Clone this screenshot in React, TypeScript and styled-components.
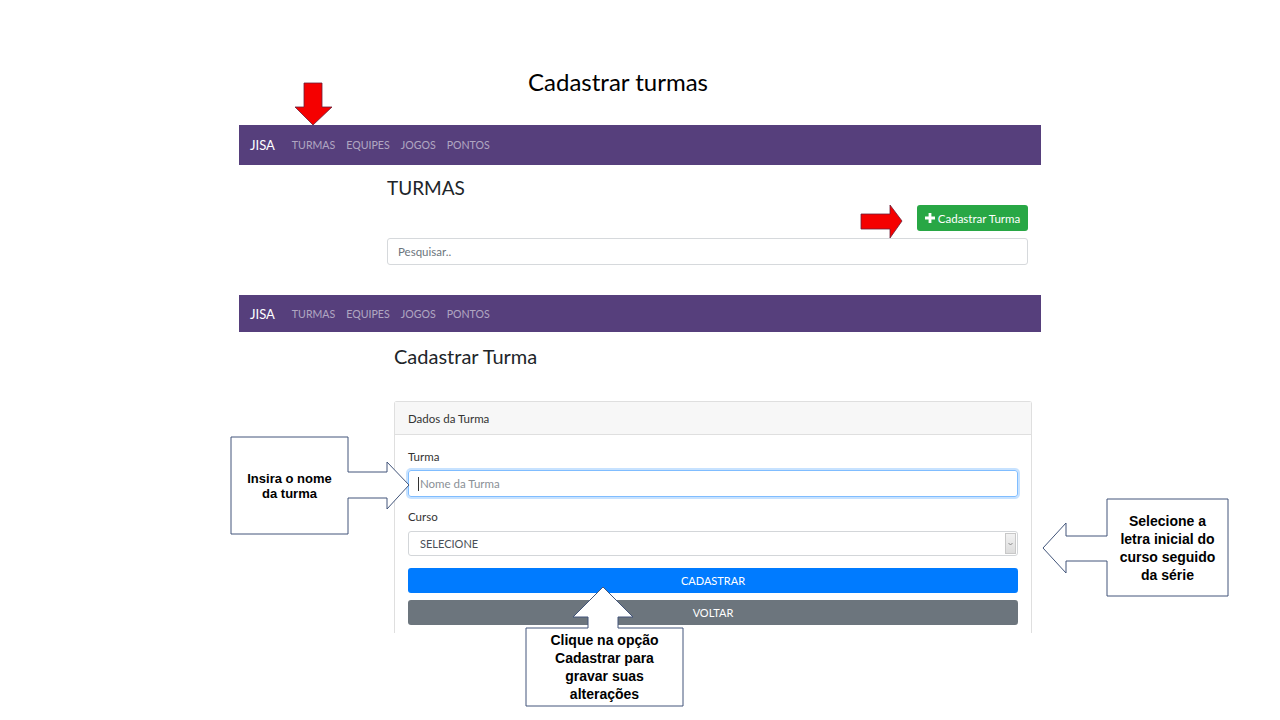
import React from 'react';
import styled, { createGlobalStyle } from 'styled-components';

const GlobalStyle = createGlobalStyle`
  html, body {
    margin: 0;
    padding: 0;
    background: #ffffff;
  }
  body {
    font-family: Lato, "Open Sans", sans-serif;
    color: #212529;
  }
`;

const Slide = styled.div`
  position: relative;
  width: 1280px;
  height: 720px;
  overflow: hidden;
  background: #ffffff;
  display: flex;
  flex-direction: column;
`;

const SlideTitle = styled.h1`
  margin: 64px 0 0 0;
  padding-right: 44px;
  height: 36px;
  line-height: 36px;
  text-align: center;
  font-family: Lato, "Open Sans", sans-serif;
  font-size: 24px;
  font-weight: 400;
  color: #000;
`;

const Shot = styled.section<{ $top: number }>`
  margin: ${({ $top }) => $top}px 0 0 239px;
  width: 802px;
  display: flex;
  flex-direction: column;
`;

const Navbar = styled.nav<{ $h: number }>`
  height: ${({ $h }) => $h}px;
  background: #563f7c;
  display: flex;
  align-items: center;
  padding: 0 11px;
`;

const Brand = styled.span`
  color: #ffffff;
  font-size: 13px;
  margin-right: 17px;
`;

const NavLink = styled.span`
  color: rgba(255, 255, 255, 0.55);
  font-size: 10.6px;
  margin-right: 11px;
`;

const ListBody = styled.div`
  padding: 0 13px 0 148px;
  display: flex;
  flex-direction: column;
`;

const PageHeading = styled.h2<{ $top: number; $size: number }>`
  margin: ${({ $top }) => $top}px 0 0 0;
  font-size: ${({ $size }) => $size}px;
  font-weight: 400;
  line-height: 26px;
  color: #212529;
`;

const ActionRow = styled.div`
  display: flex;
  justify-content: flex-end;
  margin-top: 4px;
`;

const GreenButton = styled.button`
  height: 26px;
  width: 111px;
  border: none;
  border-radius: 3px;
  background: #28a745;
  color: #ffffff;
  font-family: inherit;
  font-size: 11.5px;
  display: flex;
  align-items: center;
  justify-content: center;
  gap: 3px;
  padding: 0;
`;

const SearchBox = styled.div`
  margin-top: 7px;
  height: 27px;
  box-sizing: border-box;
  border: 1px solid #d6d9dc;
  border-radius: 3px;
  display: flex;
  align-items: center;
  padding-left: 10px;
  font-size: 11.5px;
  color: #6c757d;
`;

const FormBody = styled.div`
  padding: 0 9px 0 155px;
  display: flex;
  flex-direction: column;
`;

const Card = styled.div`
  margin-top: 32px;
  border: 1px solid #dfdfdf;
  border-bottom: none;
  border-radius: 3px 3px 0 0;
  display: flex;
  flex-direction: column;
`;

const CardHeader = styled.div`
  height: 33px;
  box-sizing: border-box;
  background: #f7f7f7;
  border-bottom: 1px solid #dfdfdf;
  display: flex;
  align-items: center;
  padding-left: 13px;
  font-size: 11.5px;
  color: #333;
`;

const CardBody = styled.div`
  padding: 15px 13px 8px 13px;
  display: flex;
  flex-direction: column;
`;

const FieldLabel = styled.label<{ $top?: number }>`
  margin-top: ${({ $top }) => $top ?? 0}px;
  font-size: 11.5px;
  line-height: 14px;
  color: #333;
`;

const TextInput = styled.div`
  margin-top: 6px;
  height: 27px;
  box-sizing: border-box;
  border: 1px solid #80bdff;
  border-radius: 3px;
  box-shadow: 0 0 0 2px rgba(0, 123, 255, 0.22);
  display: flex;
  align-items: center;
  padding-left: 9px;
  font-size: 11.5px;
  color: #8a9096;
`;

const Caret = styled.span`
  width: 1px;
  height: 14px;
  background: #333;
  margin-right: 1px;
`;

const SelectBox = styled.div`
  margin-top: 7px;
  height: 25px;
  box-sizing: border-box;
  border: 1px solid #d3d6d9;
  border-radius: 3px;
  display: flex;
  align-items: center;
  justify-content: space-between;
  padding: 0 1px 0 11px;
  font-size: 11px;
  color: #495057;
`;

const SelectArrow = styled.span`
  width: 11px;
  height: 21px;
  box-sizing: border-box;
  border: 1px solid #c8c8c8;
  background: linear-gradient(#f2f2f2, #dcdcdc);
  display: flex;
  align-items: center;
  justify-content: center;
`;

const WideButton = styled.button<{ $color: string; $top: number }>`
  margin-top: ${({ $top }) => $top}px;
  height: 25px;
  border: none;
  border-radius: 3px;
  background: ${({ $color }) => $color};
  color: #ffffff;
  font-family: inherit;
  font-size: 11px;
  padding: 0;
`;

/* overlays: red pointers and callout shapes placed on the slide */

const Overlay = styled.div<{ $x: number; $y: number; $w: number; $h: number }>`
  position: absolute;
  left: ${({ $x }) => $x}px;
  top: ${({ $y }) => $y}px;
  width: ${({ $w }) => $w}px;
  height: ${({ $h }) => $h}px;
`;

const CalloutText = styled.div<{ $x: number; $y: number; $w: number; $h: number; $size: number; $lh: number }>`
  position: absolute;
  left: ${({ $x }) => $x}px;
  top: ${({ $y }) => $y}px;
  width: ${({ $w }) => $w}px;
  height: ${({ $h }) => $h}px;
  display: flex;
  align-items: center;
  justify-content: center;
  text-align: center;
  font-family: "Liberation Sans", Arial, sans-serif;
  font-weight: 700;
  font-size: ${({ $size }) => $size}px;
  line-height: ${({ $lh }) => $lh}px;
  color: #000;
`;

const STROKE = '#42557a';

const Callout: React.FC<{
  x: number; y: number; w: number; h: number; points: string;
  box: [number, number, number, number]; size: number; lh: number;
  children: React.ReactNode;
}> = ({ x, y, w, h, points, box, size, lh, children }) => (
  <Overlay $x={x} $y={y} $w={w} $h={h}>
    <svg width={w} height={h} viewBox={`0 0 ${w} ${h}`} style={{ display: 'block' }}>
      <polygon points={points} fill="#fff" stroke={STROKE} strokeWidth="1" strokeLinejoin="miter" />
    </svg>
    <CalloutText $x={box[0]} $y={box[1]} $w={box[2]} $h={box[3]} $size={size} $lh={lh}>
      {children}
    </CalloutText>
  </Overlay>
);

const RedArrow: React.FC<{ x: number; y: number; w: number; h: number; points: string }> = ({ x, y, w, h, points }) => (
  <Overlay $x={x} $y={y} $w={w} $h={h}>
    <svg width={w} height={h} viewBox={`0 0 ${w} ${h}`} style={{ display: 'block' }}>
      <polygon points={points} fill="#f50000" stroke="#6b2038" strokeWidth="0.8" />
    </svg>
  </Overlay>
);

const NavItems = () => (
  <>
    <Brand>JISA</Brand>
    <NavLink>TURMAS</NavLink>
    <NavLink>EQUIPES</NavLink>
    <NavLink>JOGOS</NavLink>
    <NavLink>PONTOS</NavLink>
  </>
);

export default function App() {
  return (
    <Slide>
      <GlobalStyle />
      <SlideTitle>Cadastrar turmas</SlideTitle>

      <Shot $top={25}>
        <Navbar $h={40}>
          <NavItems />
        </Navbar>
        <ListBody>
          <PageHeading $top={10} $size={19}>TURMAS</PageHeading>
          <ActionRow>
            <GreenButton>
              <svg width="10" height="10" viewBox="0 0 10 10">
                <path d="M3.6 0h2.8v3.6H10v2.8H6.4V10H3.6V6.4H0V3.6h3.6z" fill="#fff" />
              </svg>
              Cadastrar Turma
            </GreenButton>
          </ActionRow>
          <SearchBox>Pesquisar..</SearchBox>
        </ListBody>
      </Shot>

      <Shot $top={30}>
        <Navbar $h={37}>
          <NavItems />
        </Navbar>
        <FormBody>
          <PageHeading $top={11} $size={20}>Cadastrar Turma</PageHeading>
          <Card>
            <CardHeader>Dados da Turma</CardHeader>
            <CardBody>
              <FieldLabel>Turma</FieldLabel>
              <TextInput>
                <Caret />
                Nome da Turma
              </TextInput>
              <FieldLabel $top={13}>Curso</FieldLabel>
              <SelectBox>
                SELECIONE
                <SelectArrow>
                  <svg width="5" height="4" viewBox="0 0 5 4">
                    <path d="M0.5 1l2 2 2-2" fill="none" stroke="#777" strokeWidth="0.8" />
                  </svg>
                </SelectArrow>
              </SelectBox>
              <WideButton $color="#007bff" $top={12}>CADASTRAR</WideButton>
              <WideButton $color="#6c757d" $top={7}>VOLTAR</WideButton>
            </CardBody>
          </Card>
        </FormBody>
      </Shot>

      <RedArrow x={294} y={82} w={40} h={44} points="10,1 28,1 28,25 38,25 19,43 1,25 10,25" />
      <RedArrow x={860} y={204} w={44} h={35} points="1,10 30,10 30,1 42,17 30,34 30,25 1,25" />

      <Callout
        x={230} y={436} w={181} h={100}
        points="1,1 118,1 118,36 157,36 157,26 179,49 157,73 157,62 118,62 118,98 1,98"
        box={[1, 1, 117, 97]} size={13} lh={15}
      >
        Insira o nome<br />da turma
      </Callout>

      <Callout
        x={1041} y={498} w={188} h={100}
        points="66,1 187,1 187,98 66,98 66,63 25,63 25,75 2,50 25,25 25,38 66,38"
        box={[66, 1, 121, 97]} size={14} lh={18}
      >
        Selecione a<br />letra inicial do<br />curso seguido<br />da série
      </Callout>

      <Callout
        x={525} y={586} w={159} h={121}
        points="78,1 108,31 93,31 93,42 158,42 158,120 1,120 1,42 63,42 63,31 48,31"
        box={[1, 42, 157, 78]} size={14} lh={18}
      >
        Clique na opção<br />Cadastrar para<br />gravar suas<br />alterações
      </Callout>
    </Slide>
  );
}
